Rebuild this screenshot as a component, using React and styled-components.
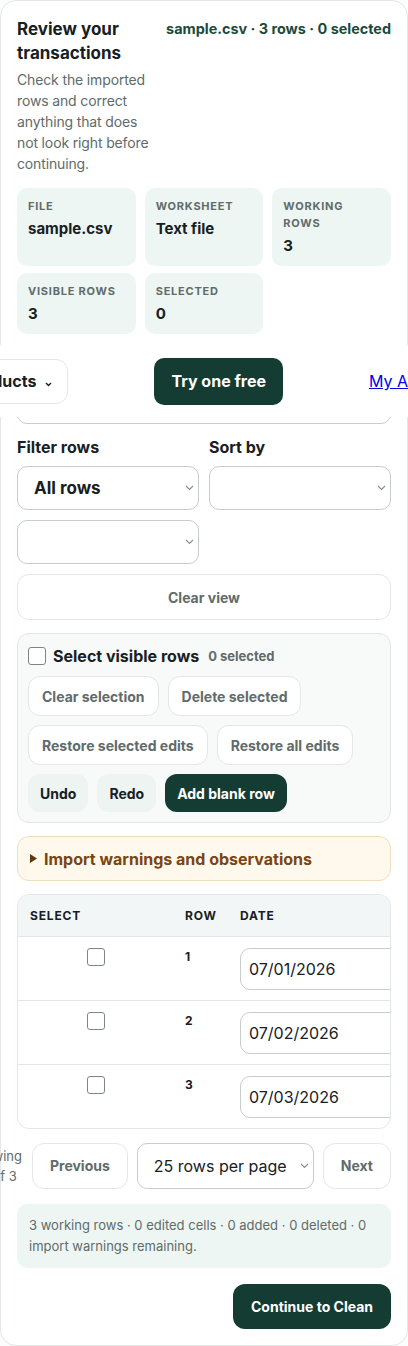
import styled, { createGlobalStyle } from "styled-components";

const INK = "#17201f";
const MUTED = "#606b6a";
const GREEN = "#153c32";
const MINT = "#eef6f3";
const LINE = "#e3e7e6";
const FIELD = "#c8cccc";

const rows = [
  { id: 1, date: "07/01/2026" },
  { id: 2, date: "07/02/2026" },
  { id: 3, date: "07/03/2026" },
];

const stats = [
  { label: "File", value: "sample.csv" },
  { label: "Worksheet", value: "Text file" },
  { label: "Working rows", value: "3" },
  { label: "Visible rows", value: "3" },
  { label: "Selected", value: "0" },
];

function Chevron() {
  return (
    <ChevronIcon width="9" height="6" viewBox="0 0 9 6">
      <path d="M1 1l3.5 3.5L8 1" fill="none" stroke="#8a8f8f" strokeWidth="1.2" />
    </ChevronIcon>
  );
}

function Select({ value, bold }) {
  return (
    <SelectWrap>
      <SelectBox $bold={bold} defaultValue={value}>
        <option value={value}>{value}</option>
      </SelectBox>
      <Chevron />
    </SelectWrap>
  );
}

export default function App() {
  return (
    <Page>
      <GlobalStyle />
      <Card>
        <Header>
          <Intro>
            <Title>Review your transactions</Title>
            <Desc>
              Check the imported rows and correct anything that does not look
              right before continuing.
            </Desc>
          </Intro>
          <Meta>sample.csv · 3 rows · 0 selected</Meta>
        </Header>

        <StatGrid>
          {stats.map((s) => (
            <Stat key={s.label}>
              <StatLabel>{s.label}</StatLabel>
              <StatValue>{s.value}</StatValue>
            </Stat>
          ))}
        </StatGrid>

        <Field>
          <FieldLabel>Search rows</FieldLabel>
          <SearchInput placeholder="" />
        </Field>

        <Filters>
          <FilterGrid>
            <Field>
              <FieldLabel>Filter rows</FieldLabel>
              <Stack>
                <Select value="All rows" bold />
                <Select value="" />
              </Stack>
            </Field>
            <Field>
              <FieldLabel>Sort by</FieldLabel>
              <Select value="" />
            </Field>
          </FilterGrid>
          <WideButton>Clear view</WideButton>
        </Filters>

        <Panel>
          <CheckRow>
            <Check type="checkbox" />
            <CheckText>Select visible rows</CheckText>
            <Count>0 selected</Count>
          </CheckRow>
          <ButtonRow>
            <GhostButton>Clear selection</GhostButton>
            <GhostButton>Delete selected</GhostButton>
          </ButtonRow>
          <ButtonRow>
            <GhostButton>Restore selected edits</GhostButton>
            <GhostButton>Restore all edits</GhostButton>
          </ButtonRow>
          <ButtonRow>
            <SoftButton>Undo</SoftButton>
            <SoftButton>Redo</SoftButton>
            <PrimaryButton>Add blank row</PrimaryButton>
          </ButtonRow>
        </Panel>

        <Warnings>
          <svg width="7" height="9" viewBox="0 0 7 9">
            <path d="M0 0l7 4.5L0 9z" fill="#5e3a12" />
          </svg>
          Import warnings and observations
        </Warnings>

        <TableWrap>
          <Table>
            <thead>
              <tr>
                <Th $w={155}>Select</Th>
                <Th $w={55}>Row</Th>
                <Th $w={220}>Date</Th>
              </tr>
            </thead>
            <tbody>
              {rows.map((r) => (
                <Tr key={r.id}>
                  <Td $center>
                    <Check type="checkbox" />
                  </Td>
                  <Td>
                    <RowNum>{r.id}</RowNum>
                  </Td>
                  <Td>
                    <DateInput defaultValue={r.date} readOnly />
                  </Td>
                </Tr>
              ))}
            </tbody>
          </Table>
        </TableWrap>

        <Pager>
          <Showing>Showing 1–3 of 3</Showing>
          <PagerButton>Previous</PagerButton>
          <PagerSelect>
            <SelectBox defaultValue="25">
              <option value="25">25 rows per page</option>
            </SelectBox>
            <Chevron />
          </PagerSelect>
          <PagerButton>Next</PagerButton>
        </Pager>

        <Summary>
          3 working rows · 0 edited cells · 0 added · 0 deleted · 0 import
          warnings remaining.
        </Summary>

        <ContinueButton>Continue to Clean</ContinueButton>
      </Card>

      <Nav>
        <NavInner>
          <NavDrop>
            Products
            <svg width="7" height="5" viewBox="0 0 7 5">
              <path d="M1 1l2.5 2.5L6 1" fill="none" stroke={INK} strokeWidth="1.4" />
            </svg>
          </NavDrop>
          <TryButton>Try one free</TryButton>
          <NavLink href="#">My Account</NavLink>
        </NavInner>
      </Nav>
    </Page>
  );
}

const GlobalStyle = createGlobalStyle`
  * { box-sizing: border-box; }
  body {
    margin: 0;
    background: #fbfcfc;
    font-family: Inter, "Liberation Sans", sans-serif;
    color: ${INK};
  }
  button, input, select { font-family: inherit; }
`;

const Page = styled.div`
  position: relative;
  width: 408px;
  overflow: hidden;
`;

const Card = styled.div`
  background: #fff;
  border: 1px solid ${LINE};
  border-radius: 16px;
  padding: 16px;
  margin-bottom: 3px;
  display: flex;
  flex-direction: column;
  gap: 13px;
`;

const Header = styled.div`
  display: flex;
  justify-content: space-between;
  align-items: flex-start;
  gap: 5px;
`;

const Intro = styled.div`
  flex: 1 1 auto;
  min-width: 0;
`;

const Title = styled.h1`
  margin: 0;
  font-size: 17px;
  line-height: 24px;
  font-weight: 700;
`;

const Desc = styled.p`
  margin: 4px 0 0;
  font-size: 14px;
  line-height: 21px;
  color: ${MUTED};
  letter-spacing: -0.01em;
`;

const Meta = styled.div`
  flex: 0 0 auto;
  font-size: 14.4px;
  line-height: 24px;
  font-weight: 700;
  color: #1b4a3b;
  white-space: nowrap;
`;

const StatGrid = styled.div`
  display: grid;
  grid-template-columns: repeat(3, 1fr);
  gap: 7px 9px;
  margin-top: 1px;
`;

const Stat = styled.div`
  background: ${MINT};
  border-radius: 10px;
  padding: 10px 11px;
`;

const StatLabel = styled.div`
  font-size: 11px;
  line-height: 17px;
  font-weight: 700;
  letter-spacing: 0.07em;
  text-transform: uppercase;
  color: ${MUTED};
`;

const StatValue = styled.div`
  margin-top: 4px;
  font-size: 15px;
  line-height: 20px;
  font-weight: 700;
`;

const Field = styled.div`
  display: flex;
  flex-direction: column;
  gap: 9px;
  min-width: 0;
`;

const FieldLabel = styled.label`
  font-size: 16px;
  line-height: 20px;
  font-weight: 700;
`;

const SearchInput = styled.input`
  height: 48px;
  border: 1px solid ${FIELD};
  border-radius: 10px;
  font-size: 16px;
  padding: 0 12px;
`;

const Filters = styled.div`
  display: flex;
  flex-direction: column;
  gap: 10px;
`;

const FilterGrid = styled.div`
  display: grid;
  grid-template-columns: 1fr 1fr;
  gap: 10px;
  align-items: start;
`;

const Stack = styled.div`
  display: flex;
  flex-direction: column;
  gap: 10px;
`;

const SelectWrap = styled.div`
  position: relative;
  height: 44px;
`;

const SelectBox = styled.select`
  appearance: none;
  width: 100%;
  height: 100%;
  background: #fff;
  border: 1px solid ${FIELD};
  border-radius: 10px;
  padding: 0 22px 0 16px;
  font-size: ${(p) => (p.$bold ? "17px" : "16px")};
  font-weight: ${(p) => (p.$bold ? 700 : 400)};
  color: ${INK};
`;

const ChevronIcon = styled.svg`
  position: absolute;
  right: 5px;
  top: 50%;
  margin-top: -3px;
  pointer-events: none;
`;

const WideButton = styled.button`
  height: 46px;
  background: #fff;
  border: 1px solid ${LINE};
  border-radius: 12px;
  font-size: 14px;
  font-weight: 700;
  color: ${MUTED};
`;

const Panel = styled.div`
  background: #f8fafa;
  border: 1px solid ${LINE};
  border-radius: 12px;
  padding: 10px;
  display: flex;
  flex-direction: column;
  gap: 9px;
`;

const CheckRow = styled.div`
  display: flex;
  align-items: center;
  height: 23px;
`;

const Check = styled.input`
  appearance: none;
  margin: 0;
  width: 18px;
  height: 18px;
  border: 1.5px solid #7f8585;
  border-radius: 3px;
  background: #fff;
`;

const CheckText = styled.span`
  margin-left: 7px;
  font-size: 16px;
  font-weight: 700;
`;

const Count = styled.span`
  margin-left: 9px;
  font-size: 13px;
  font-weight: 700;
  color: ${MUTED};
`;

const ButtonRow = styled.div`
  display: flex;
  gap: 9px;
`;

const GhostButton = styled.button`
  height: 40px;
  padding: 0 13px;
  background: #fff;
  border: 1px solid ${LINE};
  border-radius: 12px;
  font-size: 14px;
  font-weight: 700;
  color: ${MUTED};
  white-space: nowrap;
`;

const SoftButton = styled.button`
  height: 38px;
  padding: 0 12px;
  background: #edf4f2;
  border: none;
  border-radius: 12px;
  font-size: 14px;
  font-weight: 700;
  color: ${INK};
`;

const PrimaryButton = styled(SoftButton)`
  background: ${GREEN};
  color: #fff;
`;

const Warnings = styled.div`
  height: 45px;
  padding: 0 12px;
  display: flex;
  align-items: center;
  gap: 7px;
  background: #fff8ec;
  border: 1px solid #f0ddbd;
  border-radius: 12px;
  font-size: 16px;
  font-weight: 700;
  color: #7a4510;
`;

const TableWrap = styled.div`
  border: 1px solid ${LINE};
  border-radius: 12px;
  overflow: hidden;
`;

const Table = styled.table`
  border-collapse: collapse;
  width: 430px;
  table-layout: fixed;
`;

const Th = styled.th`
  width: ${(p) => p.$w}px;
  height: 41px;
  padding: 0 12px;
  text-align: left;
  background: #f3f6f6;
  border-bottom: 1px solid ${LINE};
  font-size: 12px;
  font-weight: 700;
  letter-spacing: 0.07em;
  text-transform: uppercase;
  color: ${INK};
`;

const Tr = styled.tr`
  & + & td {
    border-top: 1px solid ${LINE};
  }
`;

const Td = styled.td`
  padding: 11px 12px 10px;
  vertical-align: top;
  text-align: ${(p) => (p.$center ? "center" : "left")};
  line-height: 0;
`;

const RowNum = styled.span`
  display: block;
  font-size: 12px;
  line-height: 18px;
  font-weight: 700;
`;

const DateInput = styled.input`
  width: 180px;
  height: 42px;
  border: 1px solid ${FIELD};
  border-radius: 10px;
  padding: 0 8px;
  font-size: 16px;
  color: ${INK};
`;

const Pager = styled.div`
  display: flex;
  justify-content: flex-end;
  align-items: center;
  gap: 9px;
  margin-top: 1px;
`;

const Showing = styled.div`
  flex: 0 0 54px;
  font-size: 13px;
  line-height: 20px;
  color: ${MUTED};
`;

const PagerButton = styled.button`
  flex: 0 0 auto;
  height: 46px;
  padding: 0 17px;
  background: #fff;
  border: 1px solid ${LINE};
  border-radius: 12px;
  font-size: 14px;
  font-weight: 700;
  color: ${MUTED};
`;

const PagerSelect = styled(SelectWrap)`
  flex: 0 0 177px;
  height: 46px;
`;

const Summary = styled.div`
  margin-top: 2px;
  background: ${MINT};
  border-radius: 10px;
  padding: 11px 12px;
  font-size: 13px;
  line-height: 21px;
  color: ${MUTED};
`;

const ContinueButton = styled.button`
  align-self: flex-end;
  margin-top: 3px;
  height: 45px;
  padding: 0 18px;
  background: ${GREEN};
  border: none;
  border-radius: 12px;
  font-size: 14px;
  font-weight: 700;
  color: #fff;
`;

const Nav = styled.header`
  position: absolute;
  top: 345px;
  left: 0;
  width: 408px;
  height: 72px;
  background: #fff;
  overflow: hidden;
  display: flex;
  align-items: center;
  justify-content: center;
`;

const NavInner = styled.nav`
  display: flex;
  align-items: center;
  gap: 86px;
  flex-shrink: 0;
  margin-left: 2px;
`;

const NavDrop = styled.button`
  flex-shrink: 0;
  height: 45px;
  padding: 0 15px;
  display: flex;
  align-items: center;
  gap: 9px;
  background: #fff;
  border: 1px solid ${LINE};
  border-radius: 12px;
  font-size: 16px;
  font-weight: 700;
  color: ${INK};

  svg {
    margin-top: 6px;
  }
`;

const TryButton = styled.button`
  flex-shrink: 0;
  height: 47px;
  padding: 0 17px;
  background: ${GREEN};
  border: none;
  border-radius: 10px;
  font-size: 16px;
  font-weight: 700;
  color: #fff;
`;

const NavLink = styled.a`
  flex-shrink: 0;
  font-size: 16px;
  color: #0000ee;
  text-decoration: underline;
  white-space: nowrap;
`;
